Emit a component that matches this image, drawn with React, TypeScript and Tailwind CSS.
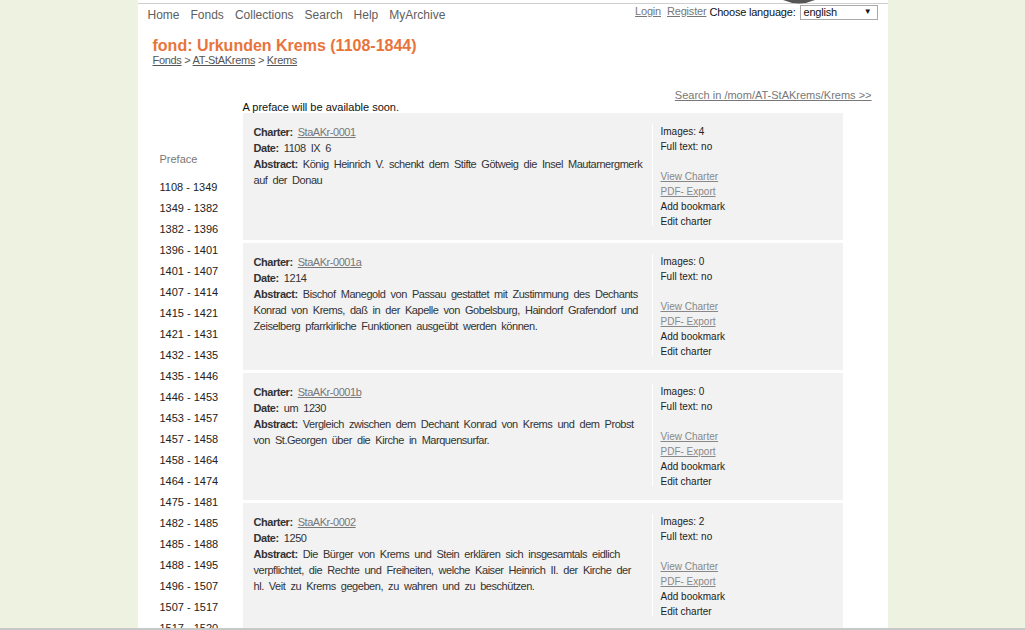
const FONT = "font-['Liberation_Sans',Arial,sans-serif]"

const NAV = ['Home', 'Fonds', 'Collections', 'Search', 'Help', 'MyArchive']

const YEARS = [
  '1108 - 1349', '1349 - 1382', '1382 - 1396', '1396 - 1401', '1401 - 1407',
  '1407 - 1414', '1415 - 1421', '1421 - 1431', '1432 - 1435', '1435 - 1446',
  '1446 - 1453', '1453 - 1457', '1457 - 1458', '1458 - 1464', '1464 - 1474',
  '1475 - 1481', '1482 - 1485', '1485 - 1488', '1488 - 1495', '1496 - 1507',
  '1507 - 1517', '1517 - 1520',
]

const CHARTERS = [
  {
    id: 'StaAKr-0001', date: '1108 IX 6', images: 4,
    abstract: 'König Heinrich V. schenkt dem Stifte Götweig die Insel Mautarnergmerk auf der Donau',
  },
  {
    id: 'StaAKr-0001a', date: '1214', images: 0,
    abstract: 'Bischof Manegold von Passau gestattet mit Zustimmung des Dechants Konrad von Krems, daß in der Kapelle von Gobelsburg, Haindorf Grafendorf und Zeiselberg pfarrkirliche Funktionen ausgeübt werden können.',
  },
  {
    id: 'StaAKr-0001b', date: 'um 1230', images: 0,
    abstract: 'Vergleich zwischen dem Dechant Konrad von Krems und dem Probst von St.Georgen über die Kirche in Marquensurfar.',
  },
  {
    id: 'StaAKr-0002', date: '1250', images: 2,
    abstract: 'Die Bürger von Krems und Stein erklären sich insgesamtals eidlich verpflichtet, die Rechte und Freiheiten, welche Kaiser Heinrich II. der Kirche der hl. Veit zu Krems gegeben, zu wahren und zu beschützen.',
  },
]

function CharterCard({ c }: { c: typeof CHARTERS[number] }) {
  return (
    <div className="flex h-[127px] bg-[#f2f2f2] mb-[3px]">
      <div className="w-[409px] pl-[11px] pr-[8px] pt-[11px] text-[11px] leading-[16px] tracking-[-0.46px] [word-spacing:2.5px] text-[#333]">
        <div>
          <span className="font-bold">Charter:</span>{' '}
          <a className="text-[#777] underline">{c.id}</a>
        </div>
        <div><span className="font-bold">Date:</span> {c.date}</div>
        <div><span className="font-bold">Abstract:</span> {c.abstract}</div>
      </div>
      <div className="mt-[11px] mb-[14px] border-l border-white pl-[8px] text-[10px] leading-[15px] text-[#222]">
        <div>Images: {c.images}</div>
        <div>Full text: no</div>
        <div className="h-[15px]" />
        <div><a className="text-[#888] underline">View Charter</a></div>
        <div><a className="text-[#888] underline">PDF- Export</a></div>
        <div>Add bookmark</div>
        <div>Edit charter</div>
      </div>
    </div>
  )
}

export default function App() {
  return (
    <div className={`${FONT} relative h-[630px] overflow-hidden bg-[#eef2e0]`}>
      <div className="relative mx-auto w-[750px] min-h-[630px] bg-white pt-[3px]">
        {/* logo peeking at top */}
        <svg className="absolute left-[645px] top-0" width="32" height="4" viewBox="0 0 32 4">
          <path d="M0 0 Q16 7 32 0 Z" fill="#555" />
        </svg>
        <div className="border-t border-[#cfcfcf]" />

        {/* top nav */}
        <div className="flex items-start justify-between pl-[10px] pr-[10px]">
          <div className="flex gap-[11px] pt-[4px] text-[12px] leading-[14px] text-[#5e5e5e]">
            {NAV.map(n => <span key={n}>{n}</span>)}
          </div>
          <div className="flex items-center text-[11px] tracking-[-0.2px] text-[#111]">
            <a className="-mt-[3px] text-[#777] underline">Login</a>
            <a className="-mt-[3px] ml-[6px] text-[#777] underline">Register</a>
            <span className="ml-[3px]">Choose language:</span>
            <div className="ml-[4px] flex h-[15px] w-[78px] items-center justify-between border border-[#aaa] pl-[3px] pr-[5px]">
              <span>english</span>
              <span className="text-[8px]">▼</span>
            </div>
          </div>
        </div>

        {/* title */}
        <div className="pl-[15px] pt-[15px]">
          <h1 className="text-[16px] font-bold leading-[17px] text-[#e8743b]">fond: Urkunden Krems (1108-1844)</h1>
          <div className="text-[11px] leading-[12px] tracking-[-0.3px] text-[#555]">
            <a className="underline">Fonds</a> &gt; <a className="underline">AT-StAKrems</a> &gt; <a className="underline">Krems</a>
          </div>
        </div>

        {/* body */}
        <div className="flex pt-[24px]">
          <div className="w-[105px] pl-[22px] pt-[61px] text-[11px] text-[#222]">
            <div className="mb-[13px] text-[#777]">Preface</div>
            {YEARS.map(y => (
              <div key={y} className="h-[21px] leading-[13px]">{y}</div>
            ))}
          </div>
          <div className="w-[629px]">
            <div className="text-right text-[11px] leading-[11px]">
              <a className="text-[#777] underline">Search in /mom/AT-StAKrems/Krems &gt;&gt;</a>
            </div>
            <div className="text-[11px] leading-[12px] text-[#111]">A preface will be available soon.</div>
            <div className="w-[600px]">
              {CHARTERS.map(c => <CharterCard key={c.id} c={c} />)}
            </div>
          </div>
        </div>
      </div>
      <div className="absolute bottom-0 left-0 right-0 h-[2px] bg-[#c8c8c8]" />
    </div>
  )
}
